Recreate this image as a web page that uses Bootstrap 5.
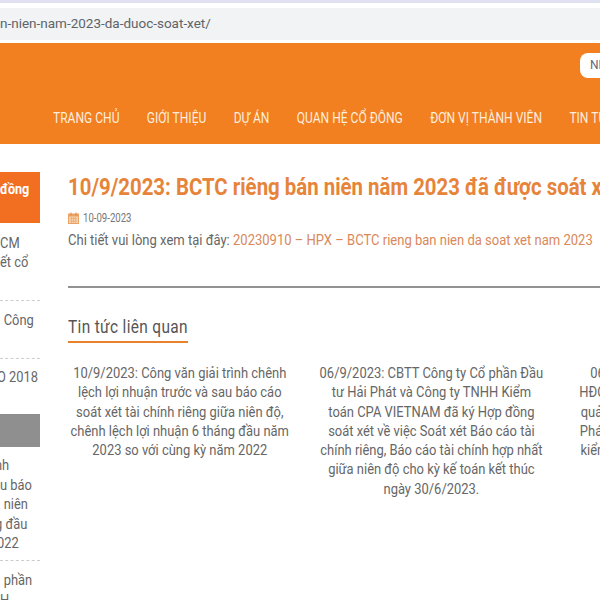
<!DOCTYPE html>
<html lang="vi">
<head>
<meta charset="utf-8">
<title>BCTC</title>
<link href="https://cdn.jsdelivr.net/npm/bootstrap@5.3.0/dist/css/bootstrap.min.css" rel="stylesheet">
<style>
html,body{width:600px;height:600px;overflow:hidden;background:#fff;font-family:Roboto,"Liberation Sans",sans-serif;color:#666}
.chrome-top{height:43px;padding-top:8px;background:linear-gradient(#dfe1f1 0,#dfe1f1 3px,#fff 3px)}
.addr{height:32px;background:#f1f3f4;color:#5f6368;font-size:13.5px;line-height:30px;white-space:nowrap}
.band{height:101px;background:#f27f20;position:relative;padding-top:65px;overflow:hidden}
.lang{position:absolute;left:580px;top:10px;width:60px;height:25px;background:#fff;border-radius:8px;color:#667;font-size:12px;line-height:25px;padding-left:10px}
.menu-row{margin-left:53px;gap:33px;white-space:nowrap;color:#fdeedd;font-size:14.5px;line-height:22px;transform:scaleX(.83);transform-origin:left top}
.main-row{width:600px;overflow:hidden}
.side{width:40px;flex:none;padding-top:28px;overflow:hidden}
.side-head{height:51px;background:#f26f21;color:#fff;font-weight:700;font-size:14px;line-height:34px;white-space:nowrap;overflow:hidden}
.side-head span{display:block;transform:scaleX(.9);transform-origin:left top}
.side-gray{height:33px;background:#8f8f8f;margin-top:27px}
.side-item{font-size:14px;line-height:19.4px;color:#666;border-bottom:1px dashed #ccc;white-space:nowrap;overflow:hidden}
.side-item span{display:block;transform:scaleX(.92);transform-origin:left top}
.side-item .cut3{margin-left:-3px}
.side-item .cut5{margin-left:-5px}
.item-a{height:78px;padding-top:11px}
.item-b{height:58px;padding-top:10px}
.item-c{padding-top:9px;border-bottom:0}
.item-d{height:114px;padding-top:9px}
.item-e{padding-top:10px;border-bottom:0}
.body-col{margin-left:28px;width:532px;flex:none;padding-top:30px;overflow:hidden}
.post-title{font-size:23px;line-height:28px;font-weight:700;color:#e6843a;margin:0;white-space:nowrap;transform:scaleX(.887);transform-origin:left top}
.post-date{font-size:12px;line-height:16px;color:#777;margin-top:8px}
.post-date span{display:block;transform:scaleX(.8);transform-origin:left center}
.post-line{font-size:14px;line-height:20px;color:#666;margin-top:4px;white-space:nowrap;transform:scaleX(.93);transform-origin:left top}
.post-line a{color:#d9885a;text-decoration:none}
.sep{border-top:2px solid #929292;margin:36px 0 0;width:100%}
.rel-title{display:inline-block;font-size:18px;line-height:24px;color:#555;border-bottom:2px solid #e8822c;padding-bottom:2px;margin-top:27px;letter-spacing:.4px;transform:scaleX(.857);transform-origin:left top}
.rel-row{margin-top:21px;margin-left:-2px;gap:26px;transform:scaleX(.925);transform-origin:left top;width:800px}
.rel-item{flex:none;width:246px;text-align:center;font-size:14px;line-height:19.3px;color:#666}
</style>
</head>
<body>
<div class="chrome-top"><div class="addr">n-nien-nam-2023-da-duoc-soat-xet/</div></div>
<div class="band">
  <div class="lang">NH</div>
  <div class="d-flex menu-row"><span>TRANG CHỦ</span><span>GIỚI THIỆU</span><span>DỰ ÁN</span><span>QUAN HỆ CỔ ĐÔNG</span><span>ĐƠN VỊ THÀNH VIÊN</span><span>TIN TỨC</span></div>
</div>
<div class="d-flex main-row">
  <div class="side">
    <div class="side-head"><span>đồng</span></div>
    <div class="side-item item-a"><span>CM</span><span>ết cổ</span></div>
    <div class="side-item item-b"><span class="ps-1">Công</span></div>
    <div class="side-item item-c"><span class="cut3">O 2018</span></div>
    <div class="side-gray"></div>
    <div class="side-item item-d"><span class="cut5">nh</span><span>u báo</span><span class="ps-1">niên</span><span class="cut5">g đầu</span><span class="cut3">022</span></div>
    <div class="side-item item-e"><span class="ps-1">phần</span><span>H</span></div>
  </div>
  <div class="body-col">
    <h1 class="post-title">10/9/2023: BCTC riêng bán niên năm 2023 đã được soát xét</h1>
    <div class="post-date d-flex align-items-center gap-1"><svg width="11" height="12" viewBox="0 0 11 12"><rect x=".5" y="2" width="10" height="9.5" fill="#f6d2ae" stroke="#eba264"/><rect x="1" y="2" width="9" height="2.5" fill="#eba264"/><path d="M3 .5v3M8 .5v3" stroke="#d98a4a"/><path d="M2 6.5h7M2 9h7M3.5 5v6M5.5 5v6M7.5 5v6" stroke="#eba264" stroke-width=".6"/></svg><span>10-09-2023</span></div>
    <div class="post-line">Chi tiết vui lòng xem tại đây: <a href="#">20230910 – HPX – BCTC rieng ban nien da soat xet nam 2023</a></div>
    <hr class="sep opacity-100">
    <div class="rel-title">Tin tức liên quan</div>
    <div class="d-flex rel-row">
      <div class="rel-item">10/9/2023: Công văn giải trình chênh lệch lợi nhuận trước và sau báo cáo soát xét tài chính riêng giữa niên độ, chênh lệch lợi nhuận 6 tháng đầu năm 2023 so với cùng kỳ năm 2022</div>
      <div class="rel-item">06/9/2023: CBTT Công ty Cổ phần Đầu tư Hải Phát và Công ty TNHH Kiểm toán CPA VIETNAM đã ký Hợp đồng soát xét về việc Soát xét Báo cáo tài chính riêng, Báo cáo tài chính hợp nhất giữa niên độ cho kỳ kế toán kết thúc ngày 30/6/2023.</div>
      <div class="rel-item">06/9/2023: Nghị quyết Hội đồng<br>HĐQT Công ty Cổ phần Đầu tư Hải P<br>quản trị Công ty CP Đầu tư Hải Phát<br>Phát về việc lựa chọn đơn vị kiểm to<br>kiểm toán báo cáo tài chính năm 23</div>
    </div>
  </div>
</div>
</body>
</html>
